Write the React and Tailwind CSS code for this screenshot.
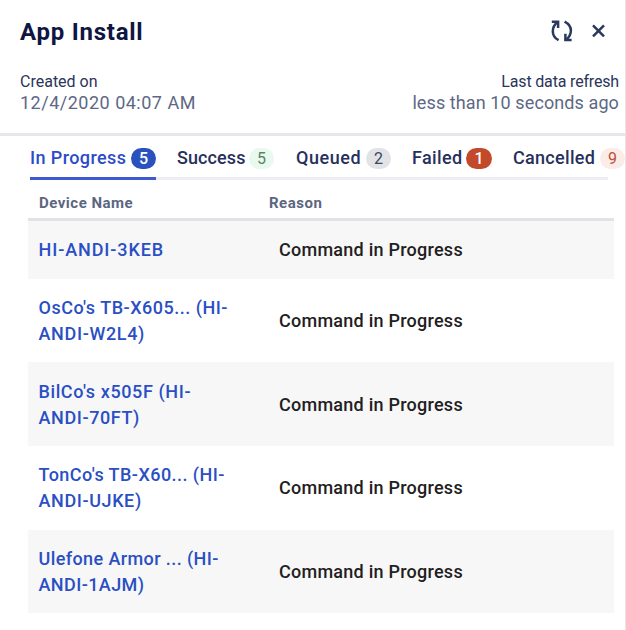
const tabs = [
  { label: 'In Progress', count: 5, width: 'w-[147px]', labelWidth: 'w-[101px]', tracking: 'tracking-[0.4px]', text: 'text-[#2c4bc8]', badge: 'w-[25px] bg-[#2a52be] text-white font-medium' },
  { label: 'Success', count: 5, width: 'w-[119px]', labelWidth: 'w-[72px]', tracking: 'tracking-[0.1px]', text: 'text-[#27305c]', badge: 'w-[25px] bg-[#e8f9ee] text-[#5f8268]' },
  { label: 'Queued', count: 2, width: 'w-[116px]', labelWidth: 'w-[70px]', tracking: 'tracking-[0.55px]', text: 'text-[#27305c]', badge: 'w-[25px] bg-[#e1e3e7] text-[#3b4660]' },
  { label: 'Failed', count: 1, width: 'w-[101px]', labelWidth: 'w-[54px]', tracking: 'tracking-[0.35px]', text: 'text-[#27305c]', badge: 'w-[26px] bg-[#c24a2b] text-white font-medium' },
  { label: 'Cancelled', count: 9, width: 'w-[113px]', labelWidth: 'w-[87px]', tracking: 'tracking-[0.3px]', text: 'text-[#27305c]', badge: 'w-[25px] bg-[#fbece8] text-[#bd4f38]' },
];

const rows = [
  { lines: ['HI-ANDI-3KEB'], tracking: ['tracking-[0.9px]'], height: 'h-[57.8px]' },
  { lines: ["OsCo's TB-X605... (HI-", 'ANDI-W2L4)'], tracking: ['tracking-[0.5px]', 'tracking-[0.65px]'], height: 'h-[83.6px]' },
  { lines: ["BilCo's x505F (HI-", 'ANDI-70FT)'], tracking: ['tracking-[0.6px]', 'tracking-[0.6px]'], height: 'h-[83.6px]' },
  { lines: ["TonCo's TB-X60... (HI-", 'ANDI-UJKE)'], tracking: ['tracking-[0.45px]', 'tracking-[0.6px]'], height: 'h-[83.6px]' },
  { lines: ['Ulefone Armor ... (HI-', 'ANDI-1AJM)'], tracking: ['tracking-[0.4px]', 'tracking-[0.4px]'], height: 'h-[83.6px]' },
];

function RefreshIcon() {
  return (
    <svg width="24" height="24" viewBox="0 0 24 24" fill="none" stroke="#2b3a5c" strokeWidth="2.5">
      <path d="M8.6 21.2C4.8 19.2 2.8 15.9 2.8 12.2 2.8 8.4 4.6 5.4 7.6 3" />
      <path d="M1.8 2.7H8.1V9" />
      <path d="M14.6 2.6C18.4 4.6 20.9 7.9 20.9 11.6 20.9 15.4 19.1 18.4 16.1 20.8" />
      <path d="M21.6 21.1H15.4V14.8" />
    </svg>
  );
}

function CloseIcon() {
  return (
    <svg width="14" height="14" viewBox="0 0 14 14" fill="none" stroke="#2b3a5c" strokeWidth="2.5">
      <path d="M1 1.3L12 12.3M12 1.3L1 12.3" />
    </svg>
  );
}

export default function App() {
  return (
    <div className="flex h-[630px] w-[626px] flex-col overflow-hidden whitespace-nowrap border-r border-[#eee2e6] bg-white font-['Roboto','Liberation_Sans',sans-serif]">
      <header className="h-[136px] shrink-0 border-b-[3px] border-[#e6e6eb] pl-5 pr-1.5">
        <div className="flex h-[62px] items-center justify-between pr-[13px]">
          <h1 className="pt-px text-2xl font-bold tracking-[0.75px] text-[#0f1642]">App Install</h1>
          <div className="flex items-center gap-[18px]">
            <button aria-label="Refresh"><RefreshIcon /></button>
            <button aria-label="Close"><CloseIcon /></button>
          </div>
        </div>
        <div className="flex justify-between pt-[9px]">
          <div>
            <p className="h-[21px] text-base leading-[21px] text-[#2b3459]">Created on</p>
            <p className="text-lg leading-[22px] tracking-[0.5px] text-[#5d6884]">12/4/2020 04:07 AM</p>
          </div>
          <div className="text-right">
            <p className="h-[21px] text-base leading-[21px] tracking-[-0.17px] text-[#2b3459]">Last data refresh</p>
            <p className="text-lg leading-[22px] tracking-[0.1px] text-[#5d6884]">less than 10 seconds ago</p>
          </div>
        </div>
      </header>

      <nav className="ml-[30px] h-11 shrink-0">
        <div className="flex h-[41px] items-center pt-1">
          {tabs.map((t) => (
            <div key={t.label} className={`flex shrink-0 items-center ${t.width}`}>
              <span className={`shrink-0 pb-0.5 text-lg font-medium ${t.labelWidth} ${t.tracking} ${t.text}`}>{t.label}</span>
              <span className={`flex h-[21px] shrink-0 items-center justify-center rounded-full text-base ${t.badge}`}>{t.count}</span>
            </div>
          ))}
        </div>
        <div className="h-[3px] w-[578px] bg-[#ededf2]">
          <div className="h-full w-[126px] bg-[#4058d0]" />
        </div>
      </nav>

      <section className="ml-7 w-[586px]">
        <div className="flex h-[41px] items-center border-b-[3px] border-[#e1e1e6] pl-[11px] pt-[9px] text-[15px] font-bold text-[#5b6680]">
          <span className="w-[230px] tracking-[0.5px]">Device Name</span>
          <span className="tracking-[0.5px]">Reason</span>
        </div>
        {rows.map((r) => (
          <div key={r.lines[0]} className={`flex items-center pl-[10.5px] pt-px text-lg font-medium odd:bg-white even:bg-[#f7f7f7] ${r.height}`}>
            <div className="w-[240.5px] leading-[26px] text-[#2a4fc4]">
              {r.lines.map((l, i) => (
                <div key={l} className={r.tracking[i]}>{l}</div>
              ))}
            </div>
            <span className="tracking-[0.25px] text-[#1f2021]">Command in Progress</span>
          </div>
        ))}
      </section>
    </div>
  );
}
